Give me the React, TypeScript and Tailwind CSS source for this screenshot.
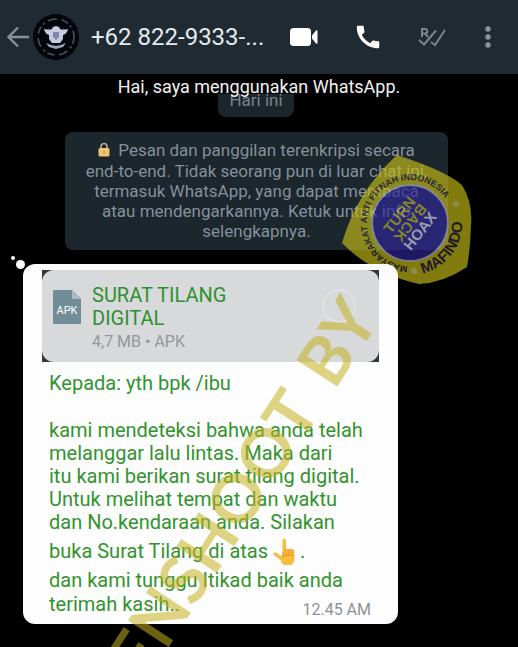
import React from "react";
import { MdCall } from "react-icons/md";

function ShieldLogo() {
  return (
    <svg viewBox="0 0 48 48" className="h-12 w-12 shrink-0" aria-hidden="true">
      <circle cx="24" cy="24" r="23" fill="#04060b" />
      <circle cx="24" cy="24" r="18" fill="none" stroke="#4a5668" strokeWidth="1.5" strokeDasharray="7 3 2 4 9 5" />
      <path d="M12 16q6 1 8 0l1-2 3-1 3 1 1 2q2 1 8 0-1 5-5 6v4l-3 4h-8l-3-4v-4q-4-1-5-6z" fill="#c9cbe0" />
      <path d="M21 19h6v5l-3 3-3-3z" fill="#8587a6" />
      <path d="M14 30l5 2 5 1 5-1 5-2-3 4-7 2-7-2z" fill="#9da4bb" />
    </svg>
  );
}

function Header() {
  return (
    <header className="flex h-[74px] items-center bg-[#1f2a32] pr-[6px] pl-1">
      <button aria-label="Kembali" className="flex h-8 w-7 shrink-0 items-center justify-center">
        <svg viewBox="0 0 24 22" className="h-[22px] w-6" fill="none" stroke="#84909a" strokeWidth="2.4">
          <path d="M23 11H3M12 1.5L2.5 11l9.500 9.500" />
        </svg>
      </button>
      <ShieldLogo />
      <h1 className="ml-[11px] min-w-0 flex-1 text-[24px] leading-8 whitespace-nowrap text-[#e4ebef]">+62 822-9333-...</h1>
      <div className="flex shrink-0 items-center">
        <button aria-label="Panggilan video" className="flex w-16 justify-center">
          <svg viewBox="0 0 28 20" className="h-5 w-7" fill="#fff">
            <rect x="0" y="1" width="21" height="18" rx="3.500" />
            <path d="M22 8.500l4-5q1.500-1 1.500 1v11q0 2-1.500 1l-4-5z" />
          </svg>
        </button>
        <button aria-label="Panggilan suara" className="flex w-16 justify-center">
          <MdCall size={30} color="#fff" />
        </button>
        <button aria-label="Tanda dibaca" className="flex w-16 justify-center">
          <svg viewBox="0 0 28 20" className="h-5 w-7" fill="none" stroke="#78858e" strokeWidth="2">
            <path d="M4 10V2h3a2.300 2.300 0 0 1 0 4.600H4M7 6.600L10 10M1 13l5 4.500L18 3.500M13 15l4 3L27 3" />
          </svg>
        </button>
        <button aria-label="Menu lainnya" className="flex w-12 justify-center">
          <svg viewBox="0 0 6 24" className="h-6 w-[6px]" fill="#8b959c">
            <circle cx="3" cy="4" r="2.700" />
            <circle cx="3" cy="12" r="2.700" />
            <circle cx="3" cy="20" r="2.700" />
          </svg>
        </button>
      </div>
    </header>
  );
}

function Lock() {
  return (
    <svg viewBox="0 0 12 15" className="mr-2 mb-1 inline-block h-[15px] w-3" aria-hidden="true">
      <path d="M3 7V4.500a3 3 0 0 1 6 0V7" fill="none" stroke="#b9a888" strokeWidth="1.700" />
      <rect x="0.500" y="6" width="11" height="8.500" rx="1.500" fill="#edc474" />
      <rect x="5.300" y="8.500" width="1.500" height="3" fill="#c99f50" />
    </svg>
  );
}

function PointUp() {
  return (
    <svg viewBox="0 0 22 28" className="inline-block h-7 w-[22px] align-[-8px]" aria-hidden="true">
      <path
        d="M9.500 14V2.500q0-2 1.700-2t1.800 2V11q8-1 8.500 2v7q0 6-4 7h-6q-3-1-4-5L1 17q-1.500-2 .5-2.500 2-.5 5 2.500l3 1z"
        fill="#f8bd3d"
      />
      <path d="M13 11v6M16 11.500v6M19 12v5M10 18q5-2 11 0M10 14v5" fill="none" stroke="#dc9329" strokeWidth="0.900" />
    </svg>
  );
}

function MafindoBadge() {
  return (
    <svg viewBox="0 0 132 132" className="absolute top-[153px] left-[341px] h-[132px] w-[132px] opacity-65" aria-hidden="true">
      <defs>
        <path id="ringOuter" d="M66.700 113A43 43 0 1 1 112 71" />
        <path id="ringLower" d="M81.600 120.500A52 52 0 0 0 118 52" />
      </defs>
      <path d="M56 2Q105 18 121 32q11 18 9 40-1 26-4 42-24 16-48 17Q30 120 1 90 16 38 56 2z" fill="#c8bf16" />
      <circle cx="69" cy="70" r="38" fill="#30269c" stroke="#bdbcc6" strokeWidth="2" />
      <g fill="#332a3c" fontFamily="Liberation Sans, Arial, sans-serif" fontWeight="700">
        <text fontSize="9">
          <textPath href="#ringOuter">MASYARAKAT ANTI FITNAH INDONESIA</textPath>
        </text>
        <text fontSize="15">
          <textPath href="#ringLower">MAFINDO</textPath>
        </text>
      </g>
      <g transform="translate(69 70) rotate(-52)" fontFamily="Liberation Sans, Arial, sans-serif" fontWeight="700" fontSize="15" textAnchor="middle">
        <text y="-8" fill="#bdb52e">TURN</text>
        <text y="5" fill="#bdb52e" transform="rotate(180)">BACK</text>
        <text y="18" fill="#dcdaf0">HOAX</text>
      </g>
      <circle cx="73" cy="118" r="3" fill="#dcd67a" />
      <circle cx="115" cy="51" r="3" fill="#dcd67a" />
    </svg>
  );
}

function Watermark() {
  return (
    <svg viewBox="0 0 518 647" className="pointer-events-none absolute top-0 left-0 h-[647px] w-[518px]" aria-hidden="true">
      <g textAnchor="end" fontFamily="Lato, sans-serif" fontWeight="700" fontSize="67" fill="#c4b11f" fillOpacity="0.550">
        <text transform="translate(322 411) rotate(-57)">SCREENSHOOT</text>
        <text transform="translate(381 319) rotate(-57)">BY</text>
      </g>
    </svg>
  );
}

function Attachment() {
  return (
    <div className="bg-[#33373a]">
      <button className="flex h-[92px] w-full items-start rounded-xl bg-[#d8d9db] pt-[14px] pr-[22px] pl-[11px] text-left">
        <span className="relative mt-[6px] flex h-[34px] w-7 items-center justify-center text-[11px] text-white">
          <svg viewBox="0 0 28 34" className="absolute inset-0 h-full w-full" aria-hidden="true">
            <path d="M1 0h18l9 9v24q0 1-1 1H1q-1 0-1-1V1q0-1 1-1z" fill="#728d98" />
            <path d="M19 0l9 9h-9z" fill="#a9bac2" />
          </svg>
          <span className="relative mt-2">APK</span>
        </span>
        <span className="ml-[11px] flex flex-1 flex-col">
          <span className="w-[160px] text-[20px] leading-[23px] text-[#2d912e]">SURAT TILANG DIGITAL</span>
          <span className="mt-[2px] text-[16px] leading-5 text-[#92979b]">4,7 MB • APK</span>
        </span>
        <svg viewBox="0 0 36 36" className="mt-1 h-9 w-9" fill="none" stroke="#e1e2e5" strokeWidth="2" aria-hidden="true">
          <circle cx="18" cy="18" r="16" />
        </svg>
      </button>
    </div>
  );
}

export default function App() {
  return (
    <div className="relative min-h-screen overflow-hidden bg-black font-['Roboto',sans-serif]">
      <Header />
      <main>
        <div className="relative h-[58px]">
          <div className="flex justify-center pr-[6px]">
            <div className="h-[43px] w-[76px] rounded-lg bg-[#1b252c] pt-4 text-center text-[17px] leading-5 text-[#78838a]">
              Hari ini
            </div>
          </div>
          <p className="absolute inset-x-0 top-0 h-5 bg-black text-center text-[18px] leading-[26px] text-[#f0f0f0]">
            Hai, saya menggunakan WhatsApp.
          </p>
        </div>

        <p className="mr-[70px] ml-[65px] rounded-lg bg-[#1b262d] pt-2 pb-[9px] text-center text-[17px] leading-[20px] whitespace-nowrap text-[#84909a]">
          <Lock />
          Pesan dan panggilan terenkripsi secara
          <br />
          end-to-end. Tidak seorang pun di luar chat ini,
          <br />
          termasuk WhatsApp, yang dapat membaca
          <br />
          atau mendengarkannya. Ketuk untuk info
          <br />
          selengkapnya.
        </p>

        <MafindoBadge />

        <article className="relative mt-[14px] mr-[120px] ml-[23px] rounded-xl bg-[#fdfdfd] px-[19px] pt-[6px] pb-1">
          <span className="absolute -top-[4px] -left-[7px] h-[9px] w-[9px] rounded-full bg-white" />
          <span className="absolute -top-[8px] -left-[12px] h-1 w-1 rounded-full bg-white" />
          <Attachment />
          <div className="pt-[10px] pl-[7px] text-[20px] leading-[23px] whitespace-nowrap text-[#32932f]">
            <p>Kepada: yth bpk /ibu</p>
            <p className="mt-6">
              kami mendeteksi bahwa anda telah
              <br />
              melanggar lalu lintas. Maka dari
              <br />
              itu kami berikan surat tilang digital.
              <br />
              Untuk melihat tempat dan waktu
              <br />
              dan No.kendaraan anda. Silakan
            </p>
            <p className="leading-[34px]">
              buka Surat Tilang di atas <PointUp /> .
            </p>
            <p className="leading-6">
              dan kami tunggu Itikad baik anda
              <br />
              terimah kasih..
            </p>
          </div>
          <time className="-mt-4 mr-2 block text-right text-[16px] leading-5 text-[#8c9297]">12.45 AM</time>
        </article>
      </main>
      <Watermark />
    </div>
  );
}
